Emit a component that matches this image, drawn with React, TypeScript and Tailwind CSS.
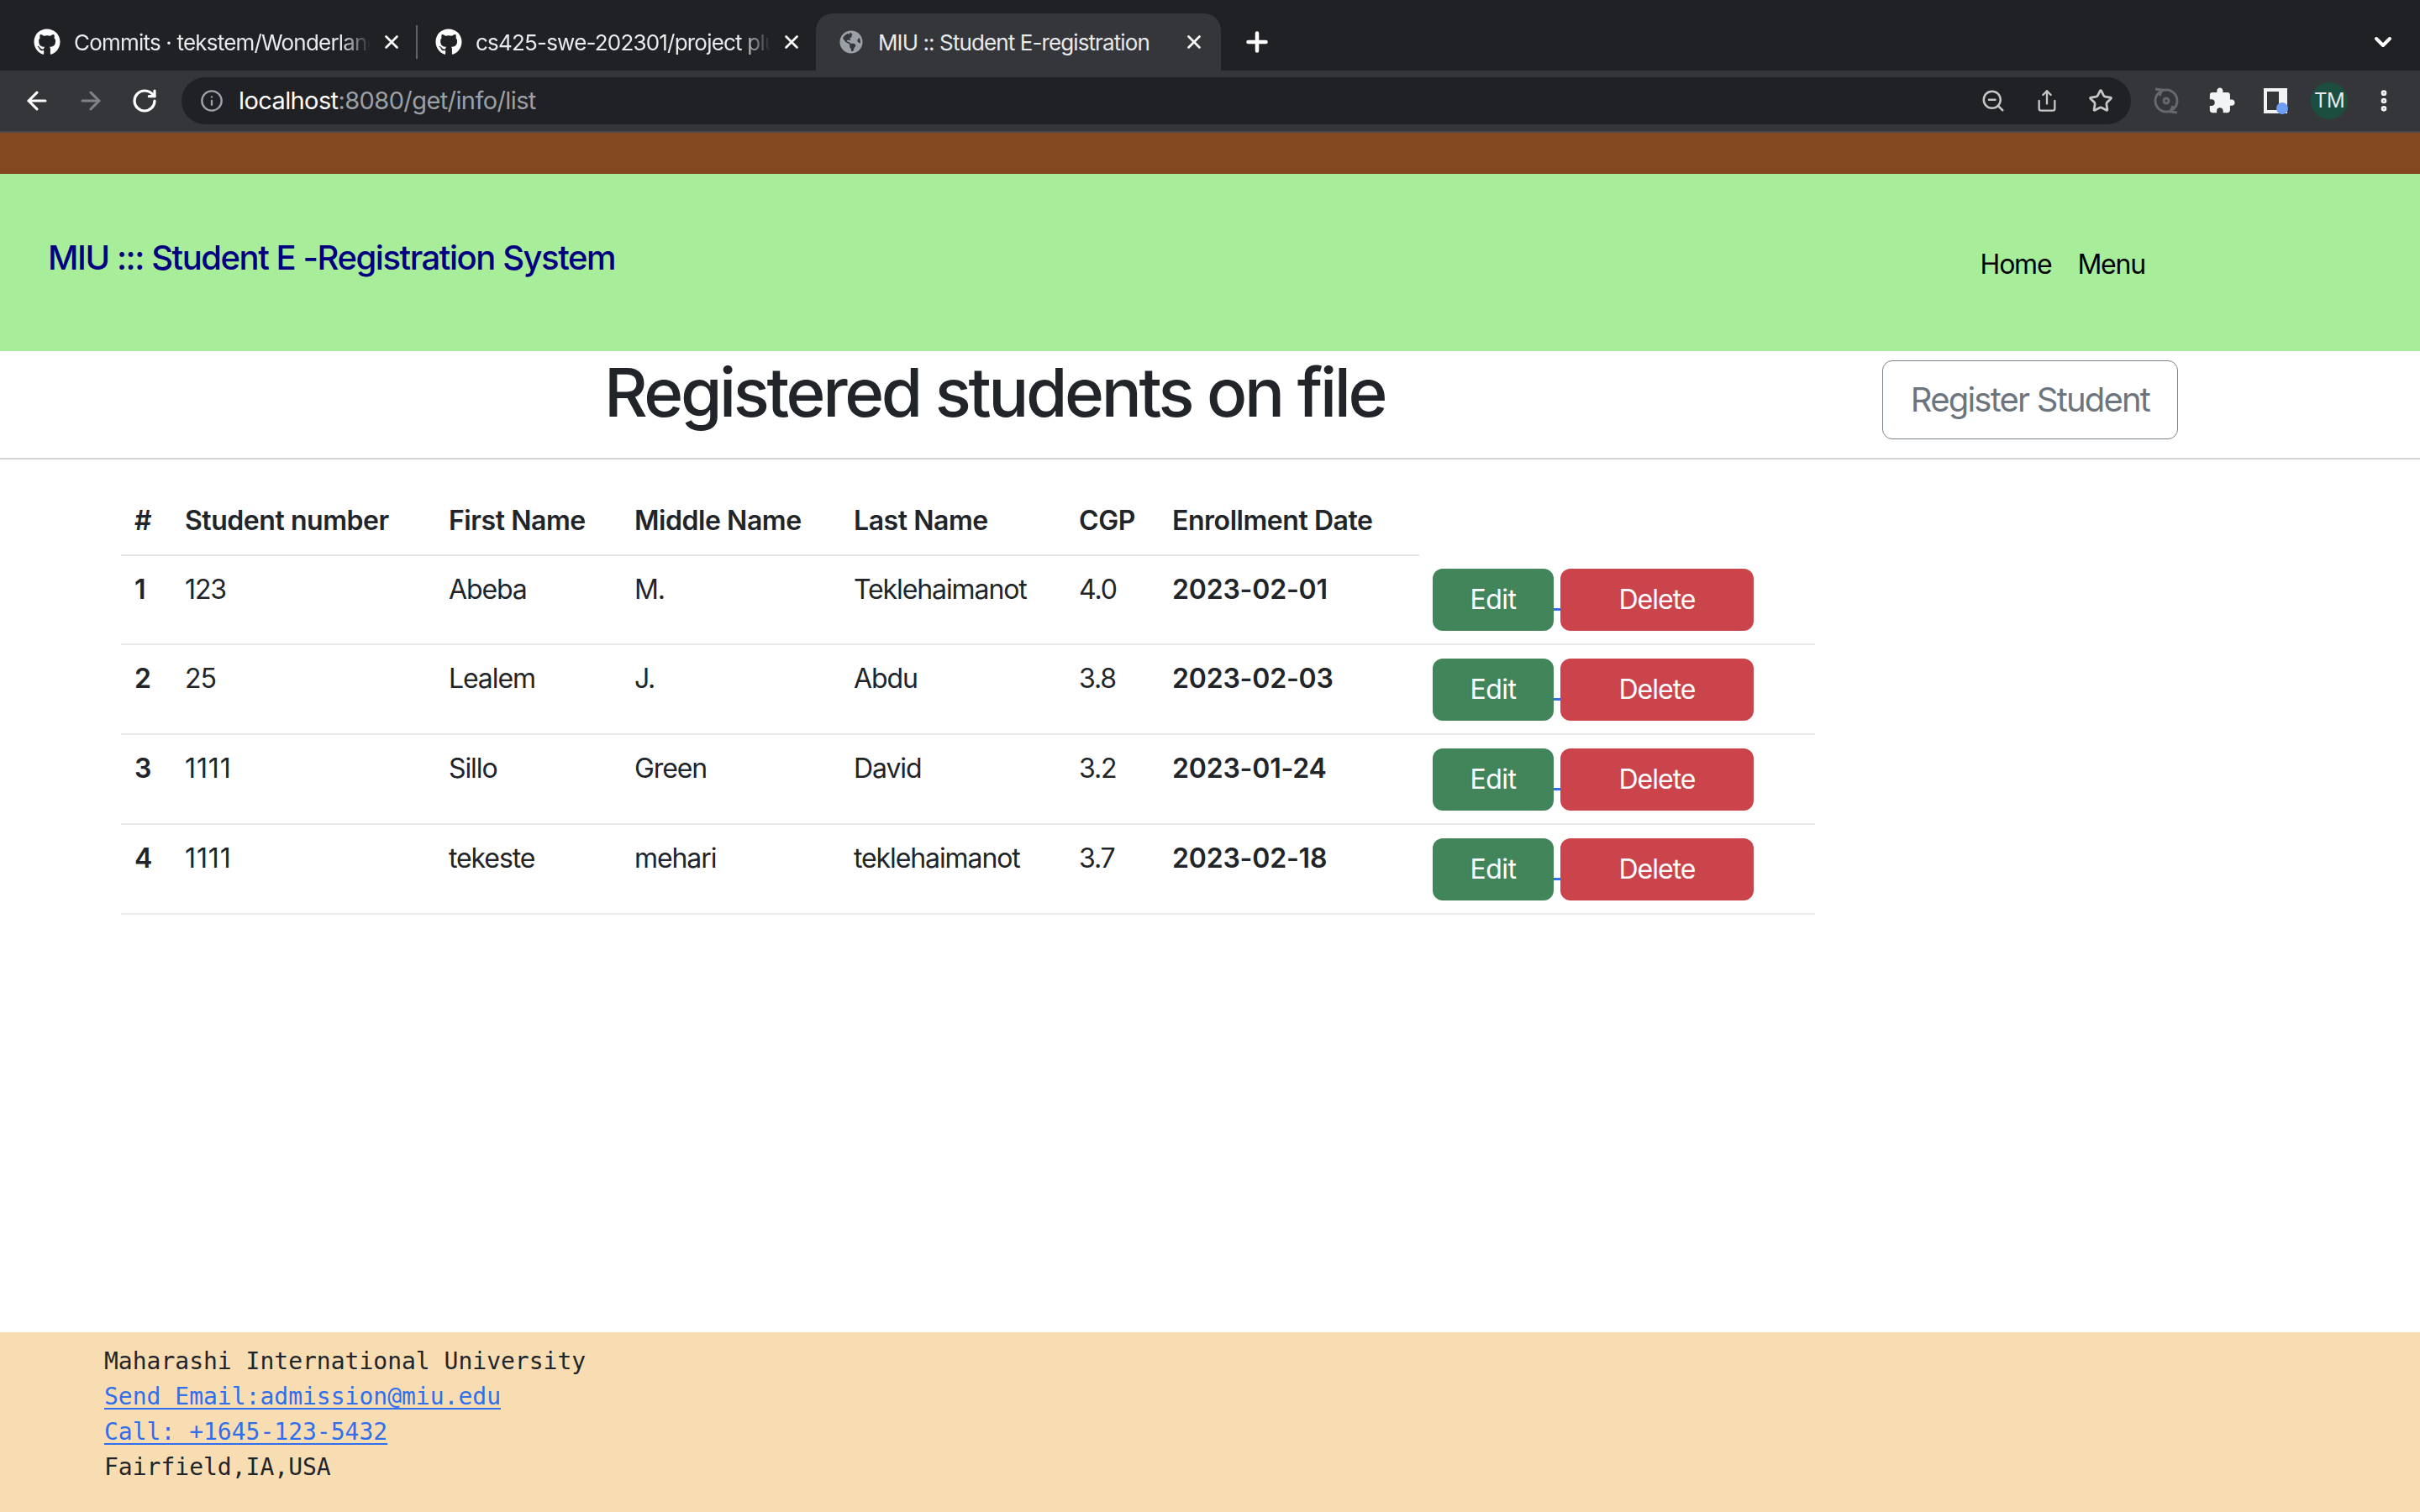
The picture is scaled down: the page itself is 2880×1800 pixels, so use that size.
import React from "react";
import { ArrowLeft, ArrowRight, RotateCw, Info, ZoomOut, Share, Star, X, Plus, ChevronDown, EllipsisVertical } from "lucide-react";
import { FaGithub, FaGlobeAmericas } from "react-icons/fa";

const rows = [
  ["1", "123", "Abeba", "M.", "Teklehaimanot", "4.0", "2023-02-01"],
  ["2", "25", "Lealem", "J.", "Abdu", "3.8", "2023-02-03"],
  ["3", "1111", "Sillo", "Green", "David", "3.2", "2023-01-24"],
  ["4", "1111", "tekeste", "mehari", "teklehaimanot", "3.7", "2023-02-18"],
];
const heads = ["#", "Student number", "First Name", "Middle Name", "Last Name", "CGP", "Enrollment Date"];

function cellClass(c: string, i: number) {
  if (i === 0 || i === 6) return "font-semibold tracking-[-0.2px]";
  if (c === "1111") return "tracking-[0.9px]";
  return "tracking-[-1.1px]";
}

function Tab({ title, width }: { title: string; width: string }) {
  return (
    <div className={`flex items-center h-[68px] ${width}`}>
      <FaGithub className="text-white text-[32px] shrink-0" />
      <span className="ml-4 flex-1 whitespace-nowrap overflow-hidden text-[26px] tracking-[-0.8px] text-[#e8eaed] [mask-image:linear-gradient(to_right,black_90%,transparent)]">
        {title}
      </span>
      <X size={26} strokeWidth={2.5} className="text-white ml-3 shrink-0" />
    </div>
  );
}

export default function App() {
  return (
    <div className="min-h-[1800px] h-[1800px] flex flex-col bg-white font-['Inter',sans-serif] text-[#212529] overflow-hidden">
      {/* tab strip */}
      <div className="h-[84px] bg-[#202124] flex items-end shrink-0 pl-10">
        <div className="flex items-center h-[68px]">
          <Tab title="Commits · tekstem/Wonderland" width="w-[439px]" />
          <div className="w-[2px] h-10 bg-[#5f6368] ml-[16px] mr-[21px]" />
          <Tab title="cs425-swe-202301/project plu" width="w-[437px]" />
        </div>
        <div className="ml-[16px] w-[482px] h-[68px] rounded-t-[20px] bg-[#35363a] flex items-center pl-7">
          <FaGlobeAmericas className="text-[#9aa0a6] text-[28px] shrink-0" />
          <span className="ml-[18px] text-[26px] tracking-[-0.9px] text-[#e8eaed] whitespace-nowrap">MIU :: Student E-registration</span>
          <X size={26} strokeWidth={2.5} className="text-white ml-auto mr-[19px]" />
        </div>
        <div className="h-[68px] flex items-center ml-[25px]">
          <Plus size={36} strokeWidth={3} className="text-white" />
        </div>
        <ChevronDown size={32} strokeWidth={3} className="text-white ml-auto mr-[28px] mb-[18px]" />
      </div>

      {/* toolbar */}
      <div className="h-[74px] bg-[#35363a] border-b-2 border-[#4a4b4f] shrink-0 flex items-center pl-[27px]">
        <ArrowLeft size={34} strokeWidth={2.2} className="text-white" />
        <ArrowRight size={34} strokeWidth={2.2} className="text-[#808184] ml-[30px]" />
        <RotateCw size={32} strokeWidth={2.4} className="text-white ml-[31px]" />
        <div className="ml-[28px] w-[2320px] h-[56px] rounded-full bg-[#202124] flex items-center pl-[22px] pr-[21px]">
          <Info size={28} className="text-[#a0a3a7]" />
          <span className="ml-[18px] text-[29px] tracking-[-0.6px] text-white">localhost<span className="text-[#9aa0a6]">:8080/get/info/list</span></span>
          <ZoomOut size={30} strokeWidth={2} className="text-[#c4c6c8] ml-auto" />
          <Share size={28} strokeWidth={2} className="text-[#c4c6c8] ml-[35px]" />
          <Star size={30} strokeWidth={2.2} className="text-[#c4c6c8] ml-[35px]" />
        </div>
        <svg width="32" height="36" viewBox="0 0 32 36" fill="none" stroke="#66686b" strokeWidth="3" className="ml-[26px]">
          <circle cx="16" cy="18" r="13" />
          <circle cx="16" cy="18" r="3" />
          <path d="M3 4l8 1-3 7M29 32l-8-1 3-7" />
        </svg>
        <svg width="34" height="34" viewBox="0 0 24 24" fill="#f1f3f4" className="ml-[33px]">
          <path d="M20.5 11H19V7c0-1.1-.9-2-2-2h-4V3.5C13 2.12 11.88 1 10.5 1S8 2.12 8 3.5V5H4c-1.1 0-1.99.9-1.99 2v3.8H3.5c1.49 0 2.7 1.21 2.7 2.7s-1.21 2.7-2.7 2.7H2V20c0 1.1.9 2 2 2h3.8v-1.5c0-1.49 1.21-2.7 2.7-2.7 1.49 0 2.7 1.21 2.7 2.7V22H17c1.1 0 2-.9 2-2v-4h1.5c1.38 0 2.5-1.12 2.5-2.5S21.88 11 20.5 11z" />
        </svg>
        <div className="relative w-[28px] h-[30px] bg-[#f1f3f4] ml-[33px] pl-[4px] py-[4px] pr-[10px] flex">
          <div className="bg-[#35363a] flex-1" />
          <div className="absolute -right-[1px] -bottom-[1px] w-[14px] h-[14px] rounded-full bg-[#6f9cf4]" />
        </div>
        <div className="ml-[28px] w-[44px] h-[44px] rounded-full bg-[#1c4e40] text-[#e8eaed] text-[24px] tracking-[-0.5px] flex items-center justify-center">TM</div>
        <EllipsisVertical size={32} strokeWidth={3} className="text-[#f1f3f4] ml-[27px]" />
      </div>

      <div className="h-[49px] bg-[#834920] shrink-0" />

      {/* green nav */}
      <div className="h-[211px] bg-[#a8ee9a] shrink-0 flex pl-[57px] pr-[327px]">
        <div className="text-[40px] font-medium text-[#000080] mt-[76px] leading-[48px] tracking-[-1.45px]">MIU ::: Student E -Registration System</div>
        <div className="ml-auto flex gap-[31px] text-[32px] tracking-[-1.2px] text-black mt-[84px] leading-[48px] h-[48px]">
          <span>Home</span>
          <span>Menu</span>
        </div>
      </div>

      {/* heading */}
      <div className="h-[129px] border-b-2 border-[#d4d4d4] flex pl-[719px] pr-[288px] shrink-0">
        <h1 className="text-[80px] font-medium leading-[96px] mt-[1px] tracking-[-3.4px]">Registered students on file</h1>
        <button className="ml-auto w-[352px] h-[94px] mt-[11px] rounded-[12px] border-[1.5px] border-[#7a828a] text-[#6c757d] text-[40px] tracking-[-1.8px]">Register Student</button>
      </div>

      {/* table */}
      <div className="pl-[144px] mt-[33px]">
        <table className="table-fixed w-[2016px] border-collapse text-[32px]">
          <colgroup>
            <col className="w-[60px]" />
            <col className="w-[314px]" />
            <col className="w-[221px]" />
            <col className="w-[261px]" />
            <col className="w-[268px]" />
            <col className="w-[111px]" />
            <col className="w-[310px]" />
            <col className="w-[471px]" />
          </colgroup>
          <thead>
            <tr>
              {heads.map((h) => (
                <th key={h} className="text-left font-semibold p-4 leading-[48px] border-b-2 border-[#e5e5e5] whitespace-nowrap tracking-[-0.45px]">{h}</th>
              ))}
            </tr>
          </thead>
          <tbody>
            {rows.map((r) => (
              <tr key={r[0]} className="border-b-2 border-[#eaeaea] align-top">
                {r.map((c, i) => (
                  <td key={i} className={`p-4 leading-[48px] whitespace-nowrap ${cellClass(c, i)}`}>{c}</td>
                ))}
                <td className="pt-4 pb-[15px] px-4 leading-[48px]">
                  <div className="flex items-center">
                    <button className="w-[144px] h-[74px] rounded-[12px] bg-[#42855b] text-white tracking-[-0.5px]">Edit</button>
                    <span className="w-[8px] h-[3px] bg-[#2f6fed] mt-[22px]" />
                    <button className="w-[230px] h-[74px] rounded-[12px] bg-[#cc444b] text-white tracking-[-1px]">Delete</button>
                  </div>
                </td>
              </tr>
            ))}
          </tbody>
        </table>
      </div>

      {/* footer */}
      <footer className="mt-auto h-[214px] bg-[#f9ddb2] shrink-0 pl-[124px] pt-[14px] font-['DejaVu_Sans_Mono',monospace] text-[28px] leading-[42px] text-[#212529]">
        <div>Maharashi International University</div>
        <div><a className="text-[#2f6fed] underline decoration-2 underline-offset-[4px]" href="#">Send Email:admission@miu.edu</a></div>
        <div><a className="text-[#2f6fed] underline decoration-2 underline-offset-[4px]" href="#">Call: +1645-123-5432</a></div>
        <div>Fairfield,IA,USA</div>
      </footer>
    </div>
  );
}
